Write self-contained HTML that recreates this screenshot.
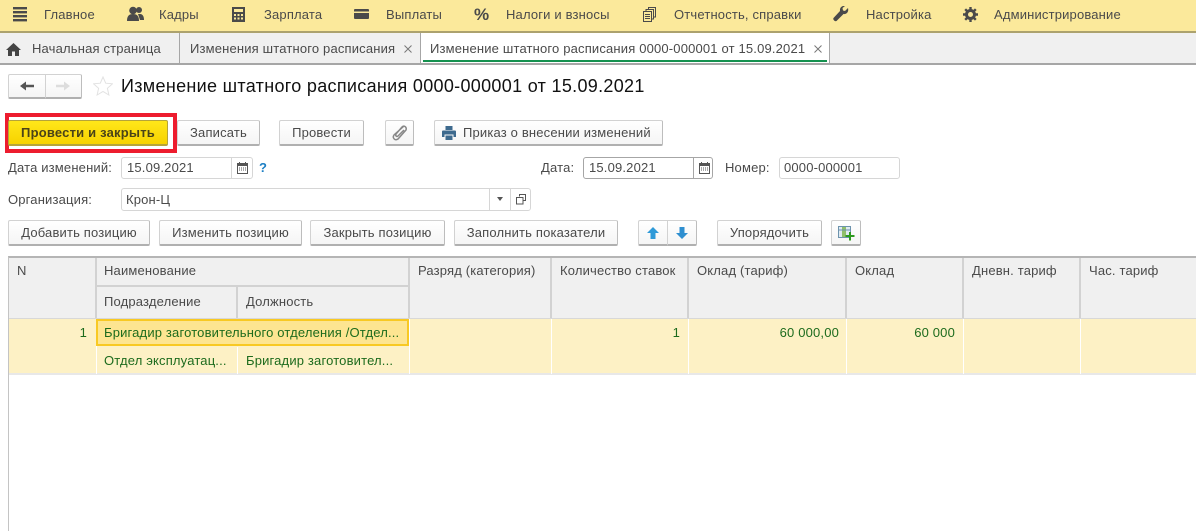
<!DOCTYPE html>
<html lang="ru"><head><meta charset="utf-8"><style>
html,body{margin:0;padding:0;background:#fff}
#p{position:relative;width:1196px;height:531px;overflow:hidden;background:#fff;font:13px/16px "Liberation Sans",sans-serif;letter-spacing:.17px;color:#4a4a4a}
#p div,#p svg{position:absolute;box-sizing:border-box}
.t{white-space:nowrap}
.b{border:1px solid #d2d2d2;border-bottom:2px solid #b0b0b0;border-right-color:#bdbdbd;border-radius:2px;background:linear-gradient(#fff,#f5f5f5);text-align:center;line-height:24px;height:26px;top:120px;color:#4a4a4a}
.i{border:1px solid #d6d6d6;border-radius:3px;background:#fff}
.h{background:#f0f0f0;border-right:2px solid #d2d2d2}
.g{color:#1d6b1d}
</style></head><body><div id="p">
<div style="left:0;top:0;width:1196px;height:33px;background:#fbe99b;border-bottom:2px solid #aca26e"></div>
<svg style="left:13px;top:7px" width="15" height="15" fill="#4a4a4a"><rect y="0" width="14" height="2.400"/><rect y="4" width="14" height="2.400"/><rect y="8" width="14" height="2.400"/><rect y="12" width="14" height="2.400"/></svg>
<div class="t" style="left:44px;top:7px">Главное</div>
<svg style="left:127px;top:6px" width="17" height="16" fill="#4a4a4a"><circle cx="6" cy="4.500" r="3.800"/><path d="M0 15c0-5 2-7 6-7s6 2 6 7z"/><circle cx="12" cy="4" r="3"/><path d="M11 8h2c3 0 4 3 4 6h-4z"/></svg>
<div class="t" style="left:159px;top:7px">Кадры</div>
<svg style="left:232px;top:7px" width="13" height="15" fill="#4a4a4a"><path fill-rule="evenodd" d="M0 0h13v15H0zM2 2v3h9V2zM2 7v2h2V7zM5.500 7v2h2V7zM9 7v2h2V7zM2 10.500v2h2v-2zM5.500 10.500v2h2v-2zM9 10.500v2h2v-2z"/></svg>
<div class="t" style="left:264px;top:7px">Зарплата</div>
<svg style="left:354px;top:9px" width="15" height="10" fill="#4a4a4a"><path fill-rule="evenodd" d="M0 1q0-1 1-1h13q1 0 1 1v8q0 1-1 1H1q-1 0-1-1zM0 2.500v1.500h15V2.500z"/></svg>
<div class="t" style="left:386px;top:7px">Выплаты</div>
<div class="t" style="left:474px;top:6px;font-weight:bold;font-size:17px;letter-spacing:0;line-height:18px">%</div>
<div class="t" style="left:506px;top:7px">Налоги и взносы</div>
<svg style="left:643px;top:7px" width="13" height="15" fill="none" stroke="#4a4a4a"><path d="M.5 4.500h8v10h-8zM3 4V2.500h7.500V12H9M5.500 2V.5h7V10H11M2 7.500h5M2 9.500h5M2 11.500h5"/></svg>
<div class="t" style="left:674px;top:7px">Отчетность, справки</div>
<svg style="left:833px;top:6px" width="16" height="16" fill="#4a4a4a"><path d="M15 2l-3 3-2-.5L9.500 2 12 0C9 -.5 6.500 1.500 7 5L.5 12c-1 1.500 1.500 4 3 3l7-7c3 .5 5.500-2 4.500-6z"/></svg>
<div class="t" style="left:866px;top:7px">Настройка</div>
<svg style="left:963px;top:7px" width="15" height="15"><circle cx="7.500" cy="7.500" r="4" fill="none" stroke="#4a4a4a" stroke-width="3"/><path stroke="#4a4a4a" stroke-width="2.400" d="M7.500 0v15M0 7.500h15M2.200 2.200l10.600 10.600M12.800 2.200L2.200 12.800"/><circle cx="7.500" cy="7.500" r="2.500" fill="#fbe99b"/></svg>
<div class="t" style="left:994px;top:7px">Администрирование</div>

<div style="left:0;top:33px;width:1196px;height:32px;background:#f0f0f0;border-bottom:2px solid #a6a6a6"></div>
<div style="left:179px;top:33px;width:1px;height:30px;background:#a6a6a6"></div>
<div style="left:420px;top:33px;width:410px;height:30px;background:#fff;border-left:1px solid #a6a6a6;border-right:1px solid #a6a6a6"></div>
<div style="left:423px;top:60px;width:404px;height:2px;background:#15914f"></div>
<svg style="left:6px;top:43px" width="15" height="13" fill="#444"><path d="M7.500 0L15 7h-2v6H9V8.500H6V13H2V7H0z"/></svg>
<div class="t" style="left:32px;top:41px">Начальная страница</div>
<div class="t" style="left:190px;top:41px">Изменения штатного расписания</div>
<svg style="left:404px;top:45px" width="8" height="8" stroke="#777"><path d="M.5.5l7 7M7.500.5l-7 7"/></svg>
<div class="t" style="left:430px;top:41px">Изменение штатного расписания 0000-000001 от 15.09.2021</div>
<svg style="left:814px;top:45px" width="8" height="8" stroke="#777"><path d="M.5.5l7 7M7.500.5l-7 7"/></svg>

<div class="b" style="left:8px;top:74px;width:38px;height:25px;border-radius:2px 0 0 2px"></div>
<div class="b" style="left:45px;top:74px;width:37px;height:25px;border-radius:0 2px 2px 0"></div>
<svg style="left:20px;top:81px" width="14" height="10" fill="#555"><path d="M0 5l6-4.500v3.200h8v2.600H6v3.200z"/></svg>
<svg style="left:56px;top:81px" width="14" height="10" fill="#ddd"><path d="M14 5L8 .5v3.200H0v2.600h8v3.200z"/></svg>
<svg style="left:93px;top:76px" width="20" height="20" fill="none" stroke="#e2e2e2"><path d="M10 1l2.700 6.200 6.800.6-5.100 4.500 1.500 6.700L10 15.500 4.100 19l1.500-6.700L.5 7.800l6.800-.6z"/></svg>
<div class="t" style="left:121px;top:75px;font-size:18px;line-height:22px;color:#111;letter-spacing:.31px">Изменение штатного расписания 0000-000001 от 15.09.2021</div>

<div style="left:5px;top:113px;width:172px;height:40px;border:4px solid #ed1c2e"></div>
<div class="b" style="left:8px;width:160px;background:linear-gradient(#ffe71a,#f7d200);border-color:#b5a43a;font-weight:bold;color:#4a4318;letter-spacing:.2px">Провести и закрыть</div>
<div class="b" style="left:177px;width:83px">Записать</div>
<div class="b" style="left:279px;width:85px">Провести</div>
<div class="b" style="left:385px;width:29px"></div>
<svg style="left:391px;top:124px" width="17" height="18" fill="none" stroke="#888" stroke-width="1.500"><path d="M13 2L3 11c-2 3 1 6 4 4l8-9c1-3-2-5-4-3L5 10c-1 2 1 3 2 2l6-6"/></svg>
<div class="b" style="left:434px;width:229px;text-align:left;padding-left:28px">Приказ о внесении изменений</div>
<svg style="left:442px;top:126px" width="14" height="14" fill="#3e6a8e"><path d="M3.500 0h7v4h-7zM1 4.500h12q1 0 1 1V11h-2.500V8.500h-9V11H0V5.500q0-1 1-1zM3.500 9.500h7V14h-7z"/></svg>

<div class="t" style="left:8px;top:160px">Дата изменений:</div>
<div class="i" style="left:121px;top:157px;width:132px;height:22px"></div>
<div style="left:231px;top:158px;width:1px;height:20px;background:#d6d6d6"></div>
<div class="t" style="left:127px;top:160px">15.09.2021</div>
<svg style="left:237px;top:162px" width="11" height="12"><path fill="#555" fill-rule="evenodd" d="M0 1h2V0h1v1h5V0h1v1h2v11H0zM1 4v7h9V4z"/><path stroke="#555" stroke-dasharray="1 1" d="M2 6h7M2 8h7"/></svg>
<div class="t" style="left:259px;top:160px;color:#1c7fc4;font-weight:bold">?</div>
<div class="t" style="left:541px;top:160px">Дата:</div>
<div class="i" style="left:583px;top:157px;width:130px;height:22px;border-color:#a6a6a6"></div>
<div style="left:693px;top:158px;width:1px;height:20px;background:#a6a6a6"></div>
<div class="t" style="left:589px;top:160px">15.09.2021</div>
<svg style="left:699px;top:162px" width="11" height="12"><path fill="#555" fill-rule="evenodd" d="M0 1h2V0h1v1h5V0h1v1h2v11H0zM1 4v7h9V4z"/><path stroke="#555" stroke-dasharray="1 1" d="M2 6h7M2 8h7"/></svg>
<div class="t" style="left:725px;top:160px">Номер:</div>
<div class="i" style="left:779px;top:157px;width:121px;height:22px"></div>
<div class="t" style="left:784px;top:160px">0000-000001</div>

<div class="t" style="left:8px;top:192px">Организация:</div>
<div class="i" style="left:121px;top:188px;width:410px;height:23px"></div>
<div style="left:489px;top:189px;width:1px;height:21px;background:#d6d6d6"></div>
<div style="left:510px;top:189px;width:1px;height:21px;background:#d6d6d6"></div>
<div class="t" style="left:126px;top:192px">Крон-Ц</div>
<svg style="left:497px;top:197px" width="6" height="4" fill="#555"><path d="M0 0h6L3 4z"/></svg>
<svg style="left:516px;top:194px" width="10" height="11" fill="none" stroke="#555"><path d="M3.500 2.500V.5h6v6h-2M.5 3.500h6.500v6.500H.5z"/></svg>

<div class="b" style="left:8px;top:220px;width:142px">Добавить позицию</div>
<div class="b" style="left:159px;top:220px;width:143px">Изменить позицию</div>
<div class="b" style="left:310px;top:220px;width:135px">Закрыть позицию</div>
<div class="b" style="left:454px;top:220px;width:164px">Заполнить показатели</div>
<div class="b" style="left:638px;top:220px;width:30px;border-radius:2px 0 0 2px"></div>
<div class="b" style="left:667px;top:220px;width:30px;border-radius:0 2px 2px 0"></div>
<svg style="left:646px;top:226px" width="14" height="14" fill="#2f9ad8"><path d="M7 1l6 6h-3.500v6h-5V7H1z"/></svg>
<svg style="left:675px;top:226px" width="14" height="14" fill="#2f8fd0"><path d="M7 13l6-6H9.500V1h-5v6H1z"/></svg>
<div class="b" style="left:717px;top:220px;width:105px">Упорядочить</div>
<div class="b" style="left:831px;top:220px;width:30px"></div>
<svg style="left:838px;top:226px" width="17" height="15"><rect x=".5" y=".5" width="12" height="11" fill="#dfeaf2" stroke="#6d93ad"/><rect x="4" y="1" width="4" height="10" fill="#8fbf6a"/><path stroke="#6d93ad" d="M.5 4h12"/><path fill="#2d9a1f" d="M11 6h2v3h3.500v2H13v3.500h-2V11H7.500V9H11z"/></svg>

<div style="left:8px;top:256px;width:1188px;height:275px;border-left:1px solid #c4c4c4;border-top:2px solid #b5b5b5"></div>
<div class="h" style="left:9px;top:258px;width:88px;height:60px"></div>
<div class="h" style="left:97px;top:258px;width:313px;height:29px;border-bottom:2px solid #d2d2d2"></div>
<div class="h" style="left:97px;top:287px;width:141px;height:31px"></div>
<div class="h" style="left:238px;top:287px;width:172px;height:31px"></div>
<div class="h" style="left:410px;top:258px;width:142px;height:60px"></div>
<div class="h" style="left:552px;top:258px;width:137px;height:60px"></div>
<div class="h" style="left:689px;top:258px;width:158px;height:60px"></div>
<div class="h" style="left:847px;top:258px;width:117px;height:60px"></div>
<div class="h" style="left:964px;top:258px;width:117px;height:60px"></div>
<div class="h" style="left:1081px;top:258px;width:115px;height:60px;border-right:0"></div>
<div style="left:9px;top:318px;width:1187px;height:57px;background:#fdf1c5;border-top:1px solid #d8d8d8;border-bottom:2px solid #e8e8e8"></div>
<div style="left:96px;top:319px;width:1px;height:55px;background:#fff"></div>
<div style="left:237px;top:347px;width:1px;height:27px;background:#fff"></div>
<div style="left:409px;top:319px;width:1px;height:55px;background:#fff"></div>
<div style="left:551px;top:319px;width:1px;height:55px;background:#fff"></div>
<div style="left:688px;top:319px;width:1px;height:55px;background:#fff"></div>
<div style="left:846px;top:319px;width:1px;height:55px;background:#fff"></div>
<div style="left:963px;top:319px;width:1px;height:55px;background:#fff"></div>
<div style="left:1080px;top:319px;width:1px;height:55px;background:#fff"></div>
<div style="left:96px;top:319px;width:313px;height:27px;background:#fde591;border:2px solid #f8c923"></div>

<div class="t" style="left:17px;top:263px">N</div>
<div class="t" style="left:104px;top:263px">Наименование</div>
<div class="t" style="left:104px;top:294px">Подразделение</div>
<div class="t" style="left:246px;top:294px">Должность</div>
<div class="t" style="left:418px;top:263px">Разряд (категория)</div>
<div class="t" style="left:560px;top:263px">Количество ставок</div>
<div class="t" style="left:697px;top:263px">Оклад (тариф)</div>
<div class="t" style="left:855px;top:263px">Оклад</div>
<div class="t" style="left:972px;top:263px">Дневн. тариф</div>
<div class="t" style="left:1089px;top:263px">Час. тариф</div>

<div class="t g" style="right:1109px;top:325px">1</div>
<div class="t g" style="left:104px;top:325px">Бригадир заготовительного отделения /Отдел...</div>
<div class="t g" style="left:104px;top:353px">Отдел эксплуатац...</div>
<div class="t g" style="left:246px;top:353px">Бригадир заготовител...</div>
<div class="t g" style="right:516px;top:325px">1</div>
<div class="t g" style="right:357px;top:325px">60 000,00</div>
<div class="t g" style="right:241px;top:325px">60 000</div>
</div></body></html>
